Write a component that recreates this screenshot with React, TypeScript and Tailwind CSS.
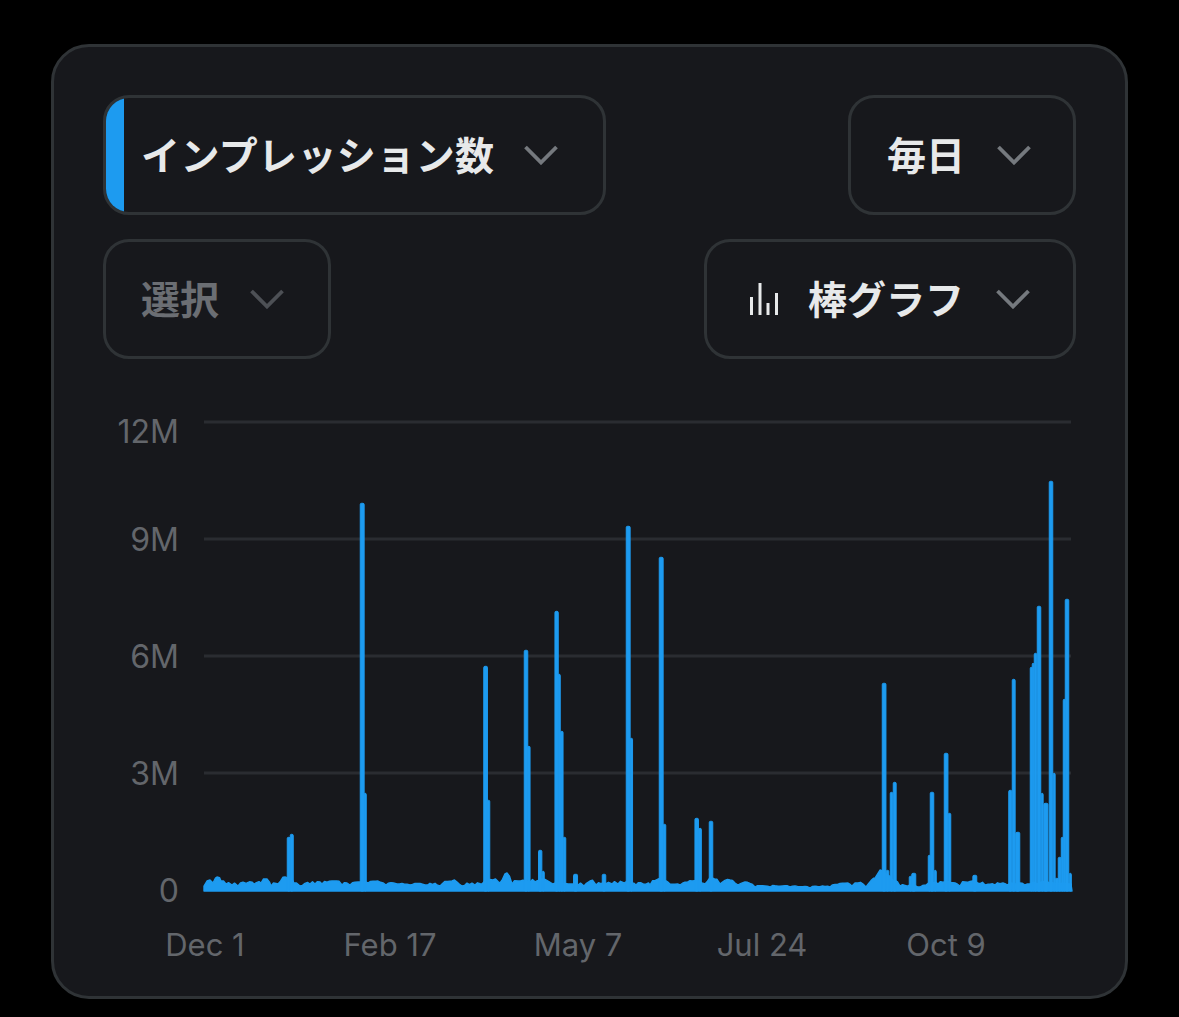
import React from "react";

const CJK = "font-['Inter','Noto_Sans_CJK_JP',sans-serif]";

function Chevron({ dim }: { dim?: boolean }) {
  return (
    <svg width="34" height="20" viewBox="0 0 34 20" fill="none" className="shrink-0">
      <path d="M1.5 2 L17 17.5 L32.5 2" stroke={dim ? "#4d5055" : "#75797e"} strokeWidth="3.8" />
    </svg>
  );
}

function BarIcon() {
  return (
    <svg width="28" height="32" viewBox="0 0 28 32" className="shrink-0" fill="#e7e9ea">
      <rect x="0" y="14" width="3" height="18" />
      <rect x="8.5" y="0" width="3" height="32" />
      <rect x="16.5" y="20" width="3" height="12" />
      <rect x="25" y="10" width="3" height="22" />
    </svg>
  );
}

const spikes: [number, number, number][] = [
  [287, 837, 3.5], [290, 834, 3.5],
  [360, 503, 4.4], [364, 793, 2.5],
  [483.5, 666, 4.2], [487, 800, 3],
  [524, 650, 4], [527.5, 746, 2.8],
  [538.3, 850, 3.8], [542, 871, 2.5],
  [554.7, 611, 3.8], [558, 674, 2.5], [560.3, 731, 3], [563, 837, 3],
  [573.3, 874, 4.5], [602, 874, 4],
  [626, 526, 4.4], [630, 738, 2.8],
  [659, 557, 4.4], [663, 824, 3],
  [694.7, 818, 4], [698.6, 828, 3],
  [709, 821, 4],
  [882, 683, 4.2], [886, 870, 3],
  [890, 792, 3], [893, 782, 3.4],
  [909, 876, 3], [911.5, 873, 4.5],
  [928, 855, 2.5], [930, 792, 4], [934, 870, 2.5],
  [944, 753, 4.2], [948, 813, 3],
  [972.6, 875, 4.4],
  [1008.5, 790, 3.5], [1012, 679, 3.4], [1015.5, 832, 4.5],
  [1030, 667, 2.4], [1032, 663, 2.2], [1034, 653, 3], [1037, 606, 4], [1041, 793, 2.4],
  [1043.6, 803, 4.6], [1049, 481, 4], [1053, 773, 2.4], [1055, 878, 3.4], [1058, 857, 3.2],
  [1061, 837, 2.4], [1063, 699, 2.4], [1065, 599, 4], [1069, 873, 2.6],
];

const bumps: [number, number][] = [
  [204, 886], [207, 881], [210, 880], [213, 883], [217, 877], [221, 881], [226, 884], [232, 885], [238, 886], [247, 883],
  [254, 884], [261, 883], [267, 879], [271, 886], [278, 884], [285, 877], [294, 883], [300, 886], [310, 884], [322, 884],
  [334, 881], [342, 885], [350, 885], [358, 882], [368, 883], [378, 881], [386, 885], [397, 884], [410, 885], [425, 885],
  [440, 886], [452, 881], [462, 886], [475, 885], [482, 884], [493, 880], [500, 883], [507, 873], [512, 884], [518, 881],
  [530, 882], [548, 881], [553, 884], [568, 884], [584, 886], [590, 881], [596, 885], [612, 884], [618, 884], [624, 883],
  [636, 885], [650, 885], [658, 879], [670, 884], [680, 885], [692, 881], [705, 884], [712, 878], [720, 884], [730, 880],
  [738, 885], [745, 882], [755, 887], [770, 887], [790, 887], [810, 888], [830, 887], [848, 883], [852, 886], [855, 883],
  [858, 883], [866, 887], [875, 878], [880, 870], [900, 886], [920, 887], [926, 885], [938, 884], [955, 883], [960, 886],
  [965, 882], [985, 885], [995, 885], [1003, 883], [1007, 885], [1025, 885], [1030, 884], [1071, 884],
];

function jagged(): string {
  const pts: string[] = ["204,891"];
  for (let i = 0; i < bumps.length - 1; i++) {
    const [x0, y0] = bumps[i];
    const [x1, y1] = bumps[i + 1];
    pts.push(`${x0},${y0}`);
    for (let x = x0 + 2.5; x < x1 - 1; x += 2.5) {
      const t = (x - x0) / (x1 - x0);
      const hash = Math.abs(Math.sin(x * 12.9898) * 43758.5453) % 1;
      const amp = x > 750 && x < 845 ? 0.7 : 2.6;
      const y = y0 + (y1 - y0) * t - 1.2 + (hash - 0.5) * amp;
      pts.push(`${x.toFixed(1)},${y.toFixed(1)}`);
    }
  }
  pts.push("1071,884", "1072,891");
  return pts.join(" ");
}

function Chart() {
  const grid = [422, 539, 656, 773];
  const yLabels: [string, number][] = [["12M", 443], ["9M", 551], ["6M", 668], ["3M", 785], ["0", 902]];
  const xLabels: [string, number][] = [["Dec 1", 205], ["Feb 17", 390], ["May 7", 578], ["Jul 24", 762], ["Oct 9", 946]];
  return (
    <svg viewBox="103 400 973 570" className="w-[973px] h-[570px] mt-[41px] block" fontFamily="Inter, sans-serif">
      {grid.map((y) => (
        <rect key={y} x="204" y={y - 1.5} width="867" height="3" fill="#2a2c31" />
      ))}
      <polygon points={jagged()} fill="#1d9bf0" stroke="#1d9bf0" strokeWidth="1.4" strokeLinejoin="round" />
      {spikes.map(([x, top, w]) => (
        <rect key={`${x}-${top}`} x={x + 0.25} y={top + 0.3} width={w - 0.5} height={890.7 - top} rx="1.2" fill="#1d9bf0" stroke="#1d9bf0" strokeWidth="1" />
      ))}
      {yLabels.map(([t, y]) => (
        <text key={t} x="179" y={y} textAnchor="end" fontSize="32" fill="#63666b">{t}</text>
      ))}
      {xLabels.map(([t, x]) => (
        <text key={t} x={x} y="956" textAnchor="middle" fontSize="31" fill="#63666b">{t}</text>
      ))}
    </svg>
  );
}

const btn = "flex items-center h-[120px] rounded-[26px] border-[3px] border-[#2f3336] overflow-hidden shrink-0";
const label = "text-[39px] leading-none font-bold whitespace-nowrap";

export default function App() {
  return (
    <div className={`min-h-[1017px] bg-black pt-[44px] pl-[51px] ${CJK}`}>
      <div className="w-[1077px] h-[955px] rounded-[38px] border-[3px] border-[#2f3336] bg-[#17181c] px-[49px] pt-[48px]">
        <div className="flex flex-col gap-[24px]">
          <div className="flex justify-between">
            <div className={`${btn} w-[503px]`}>
              <div className="w-[18px] self-stretch bg-[#1d9bf0] mr-[17px]" />
              <span className={`${label} tracking-[0.4px] text-[#e7e9ea]`}>インプレッション数</span>
              <span className="ml-[30px]"><Chevron /></span>
            </div>
            <div className={`${btn} w-[228px] pl-[36px]`}>
              <span className={`${label} text-[#e7e9ea]`}>毎日</span>
              <span className="ml-[32px]"><Chevron /></span>
            </div>
          </div>
          <div className="flex justify-between">
            <div className={`${btn} w-[228px] pl-[35px]`}>
              <span className={`${label} text-[#6b6e73]`}>選択</span>
              <span className="ml-[31px]"><Chevron dim /></span>
            </div>
            <div className={`${btn} w-[372px] pl-[43px]`}>
              <BarIcon />
              <span className={`${label} text-[#e7e9ea] ml-[30px]`}>棒グラフ</span>
              <span className="ml-[32px]"><Chevron /></span>
            </div>
          </div>
        </div>
        <Chart />
      </div>
    </div>
  );
}
